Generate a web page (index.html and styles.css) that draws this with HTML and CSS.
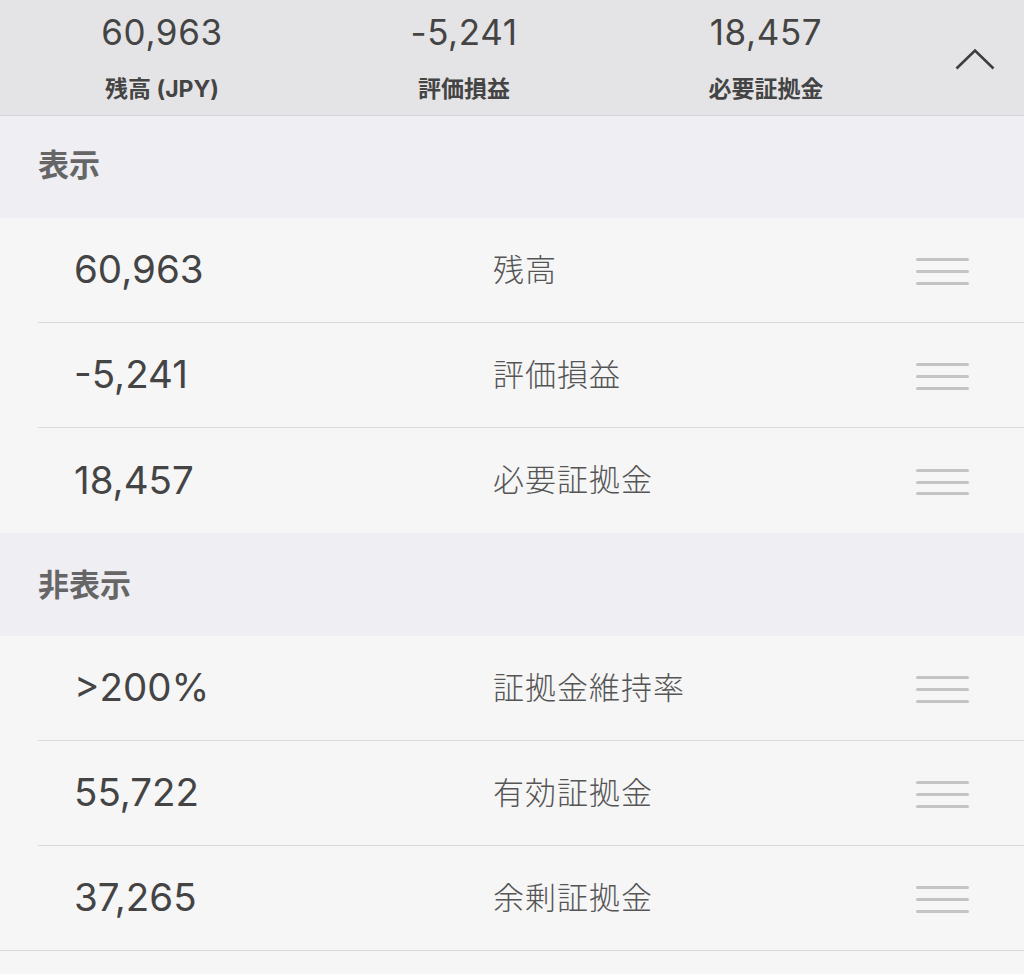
FILE: index.html
```html
<!DOCTYPE html>
<html lang="ja">
<head>
<meta charset="utf-8">
<title>表示設定</title>
<link rel="stylesheet" href="styles.css">
</head>
<body>
<header class="summary">
  <div class="stat">
    <div class="stat-value">60,963</div>
    <div class="stat-label">残高 (JPY)</div>
  </div>
  <div class="stat">
    <div class="stat-value">-5,241</div>
    <div class="stat-label">評価損益</div>
  </div>
  <div class="stat">
    <div class="stat-value">18,457</div>
    <div class="stat-label">必要証拠金</div>
  </div>
  <div class="toggle">
    <svg width="40" height="24" viewBox="0 0 40 24" aria-hidden="true">
      <path d="M1.5 20.5 L20 2.5 L38.5 20.5" fill="none" stroke="#3e3e40" stroke-width="2.6"/>
    </svg>
  </div>
</header>

<section class="group">
  <h2 class="group-title">表示</h2>
  <ul class="items">
    <li class="item"><span class="item-value">60,963</span><span class="item-label">残高</span><span class="handle"><i></i><i></i><i></i></span></li>
    <li class="item"><span class="item-value">-5,241</span><span class="item-label">評価損益</span><span class="handle"><i></i><i></i><i></i></span></li>
    <li class="item"><span class="item-value">18,457</span><span class="item-label">必要証拠金</span><span class="handle"><i></i><i></i><i></i></span></li>
  </ul>
</section>

<section class="group group-hidden">
  <h2 class="group-title">非表示</h2>
  <ul class="items">
    <li class="item"><span class="item-value">&gt;200%</span><span class="item-label">証拠金維持率</span><span class="handle"><i></i><i></i><i></i></span></li>
    <li class="item"><span class="item-value">55,722</span><span class="item-label">有効証拠金</span><span class="handle"><i></i><i></i><i></i></span></li>
    <li class="item"><span class="item-value">37,265</span><span class="item-label">余剰証拠金</span><span class="handle"><i></i><i></i><i></i></span></li>
  </ul>
</section>
</body>
</html>
```

FILE: styles.css
```css
* { box-sizing: border-box; }

html, body {
  margin: 0;
  padding: 0;
  background: #f6f6f6;
}

body {
  font-family: Inter, "Noto Sans CJK JP", sans-serif;
  color: #444;
  min-height: 974px;
}

.summary {
  display: grid;
  grid-template-columns: 302px 302px 302px 1fr;
  padding: 12px 0 11px 11px;
  background: #e4e4e6;
  border-bottom: 1px solid #d6d6d8;
  height: 116px;
}

.stat {
  display: flex;
  flex-direction: column;
  align-items: center;
}

.stat-value {
  font-size: 35px;
  line-height: 41px;
  letter-spacing: 0.6px;
  color: #444;
}

.stat-label {
  margin-top: 21px;
  font-size: 23px;
  line-height: 30px;
  font-weight: 700;
  color: #444;
}

.toggle {
  display: flex;
  justify-content: flex-end;
  padding-right: 29px;
  padding-top: 36px;
}

.toggle svg { display: block; }

.group-title {
  margin: 0;
  height: 102px;
  display: flex;
  align-items: center;
  padding: 0 0 9px 38px;
  background: #efeef3;
  font-size: 31px;
  font-weight: 700;
  color: #666;
}

.group-hidden .group-title {
  height: 103px;
  padding-bottom: 5px;
}

.items {
  list-style: none;
  margin: 0;
  padding: 0;
}

.item {
  display: flex;
  align-items: center;
  height: 105px;
  margin-left: 38px;
  padding-left: 36px;
  padding-bottom: 2px;
  border-bottom: 1px solid #d9d9d9;
}

.group:first-of-type .item:last-child {
  border-bottom: none;
}

.group-hidden .item:last-child {
  margin-left: 0;
  padding-left: 74px;
}

.item-value {
  width: 419px;
  font-size: 38.5px;
  letter-spacing: 0;
  color: #444;
}

.item-label {
  flex: 1;
  font-size: 31px;
  font-weight: 300;
  color: #555;
  letter-spacing: 1px;
  padding-bottom: 4px;
}

.handle {
  display: flex;
  flex-direction: column;
  gap: 8.7px;
  width: 53px;
  margin-right: 55px;
  margin-top: 5px;
}

.handle i {
  display: block;
  height: 3px;
  border-radius: 1.5px;
  background: #c4c4c6;
}
```
